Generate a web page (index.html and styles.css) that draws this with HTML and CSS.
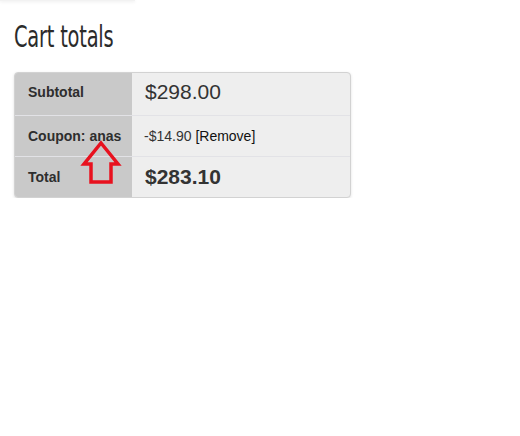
FILE: index.html
```html
<!DOCTYPE html>
<html lang="en">

<head>
    <meta charset="UTF-8">
    <meta name="viewport" content="width=device-width, initial-scale=1.0">
    <title>Cart totals</title>
    <link rel="stylesheet" href="styles.css">
</head>

<body>
    <div class="top-shadow"></div>
    <div id="cart">
        <h2 class="cart-title"><span>Cart totals</span></h2>
        <div class="totals">
            <div class="row">
                <div class="label">Subtotal</div>
                <div class="value big">$298.00</div>
            </div>
            <div class="row">
                <div class="label">Coupon: anas</div>
                <div class="value small">-$14.90 <a href="#" class="remove">[Remove]</a></div>
            </div>
            <div class="row">
                <div class="label">Total</div>
                <div class="value big strong">$283.10</div>
            </div>
            <!-- arrow pointing at the coupon code -->
            <svg class="arrow" width="44" height="50" viewBox="0 0 44 50">
                <path d="M21 5 L38 26 L31 26 L31 44 L11 44 L11 26 L4 26 Z" fill="none" stroke="#e8111e" stroke-width="3.5" stroke-linejoin="miter"/>
            </svg>
        </div>
    </div>
</body>

</html>
```

FILE: styles.css
```css
body {
    margin: 0;
    background-color: #ffffff;
    font-family: "Liberation Sans", Arial, sans-serif;
    color: #333333;
}

.top-shadow {
    width: 135px;
    height: 1px;
    background-color: #f2f2f2;
    box-shadow: 0 1px 3px rgba(0, 0, 0, 0.12);
}

#cart {
    padding: 0 14px;
}

.cart-title {
    margin: 18px 0 17px 0;
    height: 36px;
    font-family: "DejaVu Sans Condensed", "DejaVu Sans", sans-serif;
    font-weight: normal;
    font-size: 30px;
    line-height: 36px;
    color: #2b2b2b;
    white-space: nowrap;
}

.cart-title span {
    display: inline-block;
    transform: scaleX(0.72);
    transform-origin: left center;
    letter-spacing: -0.3px;
}

.totals {
    position: relative;
    width: 335px;
    border: 1px solid #d2d2d2;
    border-radius: 4px;
    overflow: hidden;
    box-shadow: 0 1px 3px rgba(0, 0, 0, 0.12);
    background-color: #eeeeee;
}

.row {
    display: flex;
    height: 40px;
    border-top: 1px solid #e2e2e6;
}

.row:first-child {
    border-top: none;
    height: 42px;
}

.row:last-child {
    height: 42px;
}

.label {
    width: 104px;
    flex-shrink: 0;
    padding-left: 13px;
    display: flex;
    align-items: center;
    background-color: #c9c9c9;
    font-weight: bold;
    font-size: 14px;
    color: #2e2e2e;
}

.row:first-child .label,
.row:first-child .value,
.row:last-child .label,
.row:last-child .value {
    padding-bottom: 4px;
}

.value {
    display: flex;
    align-items: center;
    padding-left: 13px;
    color: #333333;
}

.value.big {
    font-size: 21px;
}

.value.strong {
    font-weight: bold;
}

.value.small {
    font-size: 14px;
    padding-left: 12px;
    white-space: pre;
}

.remove {
    color: #111111;
    text-decoration: none;
}

.arrow {
    position: absolute;
    left: 65px;
    top: 65px;
}
```
